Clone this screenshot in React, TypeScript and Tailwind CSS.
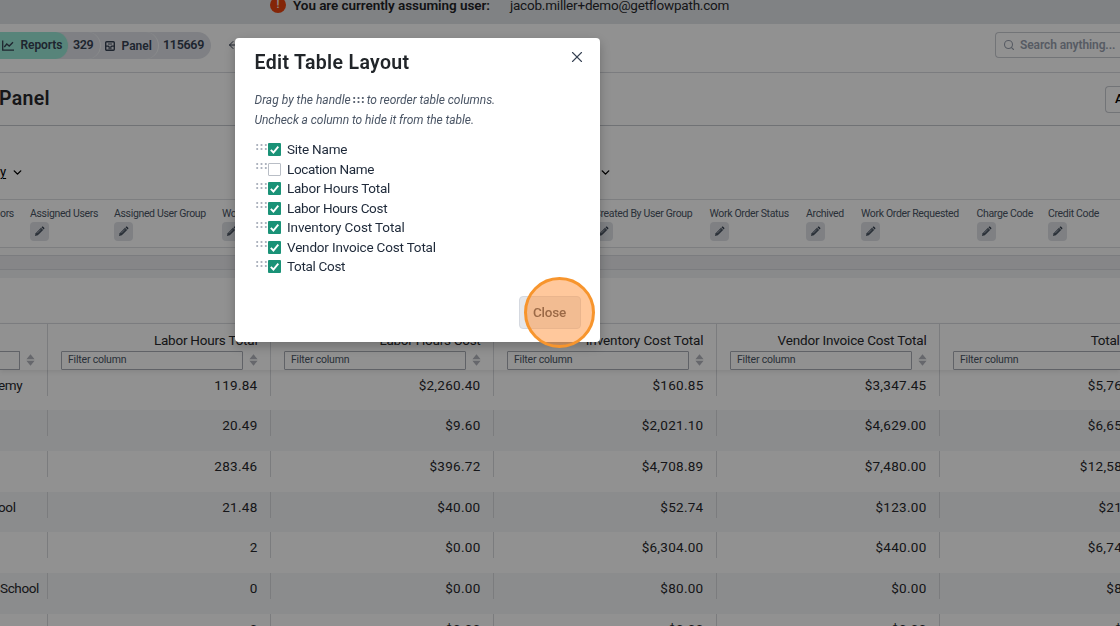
import { useState } from 'react';
import { ArrowLeft, ChevronDown, Search, X } from 'lucide-react';

interface Column {
  id: string;
  label: string;
  visible: boolean;
  tracking: string;
}

const initialColumns: Column[] = [
  { id: 'site', label: 'Site Name', visible: true, tracking: 'tracking-[-0.22px]' },
  { id: 'location', label: 'Location Name', visible: false, tracking: 'tracking-[-0.35px]' },
  { id: 'hours', label: 'Labor Hours Total', visible: true, tracking: 'tracking-[-0.25px]' },
  { id: 'hoursCost', label: 'Labor Hours Cost', visible: true, tracking: 'tracking-[-0.32px]' },
  { id: 'inventory', label: 'Inventory Cost Total', visible: true, tracking: 'tracking-[-0.1px]' },
  { id: 'vendor', label: 'Vendor Invoice Cost Total', visible: true, tracking: 'tracking-[-0.18px]' },
  { id: 'total', label: 'Total Cost', visible: true, tracking: 'tracking-[-0.32px]' },
];

const filters = [
  { label: 'ors', width: 'w-[30px]', editable: false },
  { label: 'Assigned Users', width: 'w-[84px]', editable: true },
  { label: 'Assigned User Group', width: 'w-[108px]', editable: true },
  { label: 'Work Order Category', width: 'w-[372px]', editable: true },
  { label: 'Created By User Group', width: 'w-[115.5px]', editable: true },
  { label: 'Work Order Status', width: 'w-[96.5px]', editable: true },
  { label: 'Archived', width: 'w-[55px]', editable: true },
  { label: 'Work Order Requested', width: 'w-[115.5px]', editable: true },
  { label: 'Charge Code', width: 'w-[71.5px]', editable: true },
  { label: 'Credit Code', width: 'w-[71px]', editable: true },
];

const headers = [
  { label: 'Labor Hours Total', tracking: 'tracking-[-0.22px]' },
  { label: 'Labor Hours Cost', tracking: 'tracking-[-0.27px]' },
  { label: 'Inventory Cost Total', tracking: 'tracking-[-0.1px]' },
  { label: 'Vendor Invoice Cost Total', tracking: 'tracking-[-0.18px]' },
  { label: 'Total Cost', tracking: 'tracking-[-0.25px]' },
];

const rows = [
  ['emy', '119.84', '$2,260.40', '$160.85', '$3,347.45', '$5,768.70'],
  ['', '20.49', '$9.60', '$2,021.10', '$4,629.00', '$6,659.70'],
  ['', '283.46', '$396.72', '$4,708.89', '$7,480.00', '$12,585.61'],
  ['ool', '21.48', '$40.00', '$52.74', '$123.00', '$215.74'],
  ['', '2', '$0.00', '$6,304.00', '$440.00', '$6,744.00'],
  ['School', '0', '$0.00', '$80.00', '$0.00', '$80.00'],
  ['', '0', '$0.00', '$0.00', '$0.00', '$0.00'],
];

function PencilIcon() {
  return (
    <svg viewBox="0 0 12 12" className="h-[11px] w-[11px]">
      <path d="M1 11l.8-3.2L7.6 2l2.4 2.4-5.8 5.8L1 11z" fill="#4b5563" />
      <path d="M8.2 1.4l.5-.5c.4-.4.9-.4 1.3 0l1.1 1.1c.4.4.4.9 0 1.3l-.5.5-2.4-2.4z" fill="#374151" />
      <path d="M3.4 7.9l4.1-4.1" stroke="#d5d9df" strokeWidth=".7" />
    </svg>
  );
}

function SortIcon() {
  return (
    <svg viewBox="0 0 9 12" className="h-3 w-[9px] shrink-0" fill="#b3b6be">
      <path d="M4.5 .3L8.6 5.2H.4zM4.5 11.7L.4 6.8h8.2z" />
    </svg>
  );
}

function Handle({ className }: { className: string }) {
  return (
    <svg viewBox="0 0 11 6" className={className} fill="currentColor">
      {[0.3, 4.6, 8.9].map((x) => (
        <g key={x}>
          <rect x={x} y="0.2" width="1.8" height="1.6" />
          <rect x={x} y="4.2" width="1.8" height="1.6" />
        </g>
      ))}
    </svg>
  );
}

function Breadcrumbs() {
  return (
    <div className="flex h-[27px] text-xs font-semibold text-gray-700">
      <div className="z-30 flex w-[68.5px] items-center rounded-r-full border-r border-[#dcdfe3] bg-[#99e8d6] pl-0.5 pb-px">
        <svg viewBox="0 0 12 11" className="mr-[6.5px] h-[11px] w-3" fill="none" stroke="currentColor" strokeWidth="1.3">
          <path d="M.7.5v9.7H12" />
          <path d="M2.3 7l2.5-3 2.4 2L11 2.2" />
        </svg>
        <span className="tracking-[-0.1px]">Reports</span>
      </div>
      <div className="z-20 -ml-4 flex w-12 items-center rounded-r-full border-r border-[#f3f4f6] bg-[#dfe2e8] pl-[20.5px] text-[12.5px] tracking-[-0.4px]">
        329
      </div>
      <div className="z-10 -ml-4 flex w-[74.5px] items-center rounded-r-full border-r border-[#f3f4f6] bg-[#dfe2e8] pl-[20.5px]">
        <svg viewBox="0 0 10 10" className="mr-[6.5px] h-2.5 w-2.5 shrink-0" fill="none" stroke="currentColor" strokeWidth="1.4">
          <rect x=".7" y=".7" width="8.6" height="8.6" rx="1" />
          <path d="M.7 5.2h2.6l.8.9h1.8l.8-.9h2.6" strokeWidth="1.3" />
          <path d="M3 3h4M3.4 7.7h3.2" strokeWidth=".9" />
        </svg>
        Panel
      </div>
      <div className="-ml-4 flex w-[68px] items-center rounded-r-full bg-[#dfe2e8] pl-5 text-[12.5px] tracking-[-0.3px]">
        115669
      </div>
      <ArrowLeft className="mt-[7px] ml-4 h-3 w-3" strokeWidth={2} />
    </div>
  );
}

function FilterBar() {
  return (
    <div className="flex h-[49px] shrink-0 overflow-hidden border-y border-[#dcdee2] bg-white">
      {filters.map((filter) => (
        <div key={filter.label} className={`${filter.width} shrink-0 pt-[7px]`}>
          <div className="mb-[0.5px] text-[10.5px] leading-[14px] tracking-[-0.34px] whitespace-nowrap text-gray-600">
            {filter.label}
          </div>
          {filter.editable && (
            <button className="flex h-[19px] w-[19px] items-center justify-center rounded bg-[#dfe2e7]">
              <PencilIcon />
            </button>
          )}
        </div>
      ))}
    </div>
  );
}

function ReportTable() {
  return (
    <div className="grow overflow-hidden bg-white">
      <div className="h-[46px] border-b border-[#dcdee2]" />
      <div className="relative z-10 flex h-[45.5px] shadow-[0_2px_5px_rgba(0,0,0,0.09)]">
        <div className="flex w-12 shrink-0 items-end border-r border-[#d8dade]">
          <div className="h-[19px] w-5 rounded-r-[1px] border border-l-0 border-[#a9adb5]" />
          <div className="mb-[3.5px] ml-[5.5px] flex">
            <SortIcon />
          </div>
        </div>
        {headers.map((header) => (
          <div
            key={header.label}
            className="flex w-[223px] shrink-0 flex-col justify-end border-r border-[#d8dade] pr-[12.5px] pl-[13px]"
          >
            <div className={`mb-[0.5px] text-right text-[13.5px] leading-5 text-[#27282c] ${header.tracking}`}>
              {header.label}
            </div>
            <div className="flex items-center justify-between">
              <div className="flex h-[19px] w-[182px] items-center rounded-[1px] border border-[#a9adb5] pl-1.5 text-[10.5px] tracking-[-0.2px] text-gray-600">
                Filter column
              </div>
              <SortIcon />
            </div>
          </div>
        ))}
      </div>
      {rows.map(([name, ...values], index) => (
        <div
          key={index}
          className={`flex h-[40.7px] text-[13.5px] leading-[31.5px] text-[#27282c] ${index % 2 ? 'bg-[#f5f6f8]' : 'bg-white'}`}
        >
          <div className="h-[26px] w-12 shrink-0 border-r border-[#d8dade] tracking-[-0.37px]">
            <span className={name === 'School' ? '' : '-ml-0.5'}>{name}</span>
          </div>
          {values.map((value, i) => (
            <div
              key={i}
              className="h-[26px] w-[223px] shrink-0 border-r border-[#d8dade] pr-[12.5px] text-right tracking-[0.28px]"
            >
              {value}
            </div>
          ))}
        </div>
      ))}
    </div>
  );
}

function EditLayoutModal() {
  const [columns, setColumns] = useState(initialColumns);

  const toggle = (id: string) => {
    setColumns((prev) => prev.map((c) => (c.id === id ? { ...c, visible: !c.visible } : c)));
  };

  return (
    <div className="fixed inset-0 z-40 bg-black/43 pt-[37.5px] pl-[235px]">
      <div className="relative flex h-[304.5px] w-[365px] flex-col rounded bg-white px-[19.5px] shadow-[0_4px_12px_rgba(0,0,0,0.25)]">
        <div className="flex justify-between">
          <h2 className="mt-[11.5px] text-[19.5px] leading-7 font-semibold tracking-[0.34px] text-[#212529]">
            Edit Table Layout
          </h2>
          <button className="mt-[10.5px] -mr-[5px] h-4 w-4 text-gray-700">
            <X className="-ml-0.5 h-[18px] w-[18px]" strokeWidth={1.5} />
          </button>
        </div>

        <div className="mt-[13px] text-xs leading-5 text-gray-600 italic">
          <p className="flex items-center">
            <span>Drag by the handle</span>
            <Handle className="mx-[2.5px] mb-px h-1.5 w-[11px] text-gray-700" />
            <span className="tracking-[-0.05px]">to reorder table columns.</span>
          </p>
          <p className="tracking-[-0.06px]">Uncheck a column to hide it from the table.</p>
        </div>

        <ul className="mt-2.5">
          {columns.map((column) => (
            <li key={column.id} className="flex h-[19.5px] items-center">
              <Handle className="mr-0.5 mb-1.5 ml-[1.5px] h-1.5 w-[11px] text-gray-400" />
              <label className="flex items-center">
                <input
                  type="checkbox"
                  checked={column.visible}
                  onChange={() => toggle(column.id)}
                  className="peer sr-only"
                />
                {column.visible ? (
                  <svg viewBox="0 0 13 13" className="-ml-[1.5px] h-[13px] w-[13px]">
                    <rect width="13" height="13" rx="1" fill="#1a9277" />
                    <path d="M2.8 6.9l2.6 2.6L10.3 3.6" fill="none" stroke="#fff" strokeWidth="1.9" />
                  </svg>
                ) : (
                  <span className="-ml-[1.5px] h-[13px] w-[13px] rounded-[1px] border border-[#b9bec6] bg-white" />
                )}
                <span className={`ml-[6.5px] text-[13.5px] leading-[19px] text-gray-800 ${column.tracking}`}>
                  {column.label}
                </span>
              </label>
            </li>
          ))}
        </ul>

        <button className="mt-[19px] ml-auto flex h-[33px] w-[62px] items-center justify-center rounded border border-[#d5d9e0] bg-[#e5e7eb] text-[13.5px] font-medium tracking-[-0.2px] text-gray-700">
          Close
        </button>

        {/* click marker over the close button */}
        <div className="pointer-events-none absolute top-[239.5px] left-[289px] h-[71px] w-[71px] rounded-full border-[3px] border-[#f7952d] bg-[#ff923a]/50" />
      </div>
    </div>
  );
}

export default function App() {
  return (
    <div className="flex h-[626px] flex-col overflow-hidden bg-white font-['Roboto','Liberation_Sans',sans-serif] text-gray-800">
      <div className="flex h-6 shrink-0 items-start bg-[#e2e5e9] pl-[270px] text-[13.5px] leading-5">
        <div className="-mt-[3px] flex h-4 w-4 shrink-0 items-center justify-center rounded-full bg-[#e8440f] text-[11px] font-medium text-white">
          !
        </div>
        <span className="-mt-[5px] ml-[7px] font-semibold tracking-[-0.06px] text-[#212226]">
          You are currently assuming user:
        </span>
        <span className="-mt-[5px] ml-5 tracking-[-0.2px] text-[#27282c]">jacob.miller+demo@getflowpath.com</span>
      </div>

      <nav className="flex h-[49px] shrink-0 items-start justify-between border-b border-[#d8dadf] pt-2">
        <Breadcrumbs />
        <div className="flex h-[26px] w-[125px] items-center overflow-hidden rounded-l border border-r-0 border-[#c9ccd2] pl-[7px] text-xs font-semibold tracking-[-0.1px] text-gray-400">
          <Search className="mr-[5px] h-3 w-3 shrink-0" strokeWidth={2.2} />
          Search anything...
        </div>
      </nav>

      <header className="flex h-[53px] shrink-0 items-center justify-between border-b border-[#c5c8ce]">
        <h1 className="-ml-px text-[19.5px] font-semibold tracking-[0.3px] text-[#27282c]">Panel</h1>
        <button className="h-[27px] w-[15px] overflow-hidden rounded-l border border-r-0 border-[#c9ccd2] pl-[9px] text-left text-[13px] font-medium text-black">
          Actions
        </button>
      </header>

      <div className="flex h-[73px] shrink-0 items-start pt-9 text-[13px] leading-5 text-black">
        <div className="flex w-[599px] items-center">
          <span className="underline underline-offset-2">y</span>
          <ChevronDown className="ml-[5px] h-[13px] w-[13px]" strokeWidth={2.6} />
        </div>
        <ChevronDown className="mt-1 h-[13px] w-[13px]" strokeWidth={2.6} />
      </div>

      <FilterBar />
      <div className="h-[7px] shrink-0 bg-[#fbfbfc]" />
      <div className="h-[15px] shrink-0 border-y border-[#d9dbe0] bg-[#ebecef]" />
      <div className="h-2 shrink-0 bg-[#f1f2f4]" />
      <ReportTable />

      <EditLayoutModal />
    </div>
  );
}
